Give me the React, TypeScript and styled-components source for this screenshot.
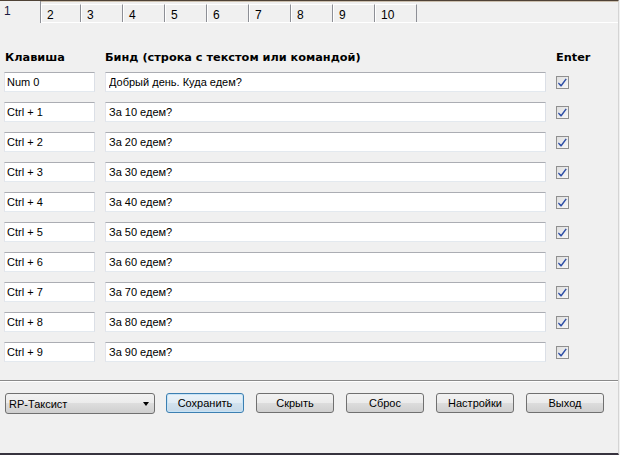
import React from "react";
import styled, { createGlobalStyle, css } from "styled-components";

const GlobalStyle = createGlobalStyle`
	html, body {
		margin: 0;
		padding: 0;
		background: #f0f0f0;
	}
	body {
		font-family: "Liberation Sans", Arial, sans-serif;
		font-size: 11px;
		color: #000;
	}
`;

const rows = [
	{ key: "Num 0", bind: "Добрый день. Куда едем?" },
	...Array.from({ length: 9 }, (_, i) => ({
		key: `Ctrl + ${i + 1}`,
		bind: `За ${(i + 1) * 10} едем?`,
	})),
];

const tabs = ["1", "2", "3", "4", "5", "6", "7", "8", "9", "10"];
const buttons = ["Сохранить", "Скрыть", "Сброс", "Настройки", "Выход"];

const tabWidth = (i: number) => (i === 0 ? 41 : i === 1 ? 40 : 42);

const App = () => {
	return (
		<>
			<GlobalStyle />
			<Window>
				<TabStrip>
					{tabs.map((t, i) => (
						<Tab key={t} $active={i === 0} $width={tabWidth(i)}>
							{t}
						</Tab>
					))}
				</TabStrip>
				<Panel>
					<Grid>
						<Heading $indent={1}>Клавиша</Heading>
						<Heading>Бинд (строка с текстом или командой)</Heading>
						<Heading>Enter</Heading>
					</Grid>
					{rows.map((r) => (
						<Row key={r.key}>
							<TextBox $pad={2} value={r.key} readOnly />
							<TextBox $pad={3} value={r.bind} readOnly />
							<CheckBox>
								<svg width="11" height="11" viewBox="0 0 11 11">
									<path
										d="M1.6 5.4 L4.1 7.4 L8.6 1.4 L9.8 2.3 L4.5 9.6 L3.6 9.6 L1 6.4 Z"
										fill="#2f4fa6"
									/>
								</svg>
							</CheckBox>
						</Row>
					))}
				</Panel>
				<Footer>
					<Combo>
						<span>RP-Таксист</span>
						<Arrow />
					</Combo>
					<Buttons>
						{buttons.map((b, i) => (
							<Button key={b} $default={i === 0}>
								{b}
							</Button>
						))}
					</Buttons>
				</Footer>
			</Window>
		</>
	);
};

const Window = styled.div`
	width: 619px;
	height: 455px;
	box-sizing: border-box;
	display: flex;
	flex-direction: column;
	border-top: 1px solid #4f4236;
	border-bottom: 2px solid #37333f;
	border-right: 1px solid #d4d4d4;
	background: #f0f0f0;
`;

const TabStrip = styled.ul`
	display: flex;
	align-items: flex-end;
	height: 21px;
	margin: 0;
	padding: 0;
	list-style: none;
	border-bottom: 1px solid #fff;
	box-shadow: inset 0 1px #cbbfae;
`;

const Tab = styled.li<{ $active: boolean; $width: number }>`
	box-sizing: border-box;
	width: ${(p) => p.$width}px;
	font-size: 12px;
	line-height: 16px;
	padding-left: 5px;
	color: #000;
	background: #f0f0f0;
	border-right: 1px solid #8d8f96;
	${(p) =>
		p.$active
			? css`
					height: 22px;
					margin-bottom: -1px;
					padding-left: 4px;
					padding-top: 2px;
					color: #1a1a40;
			  `
			: css`
					height: 18px;
					padding-top: 2px;
					border-top: 1px solid #fff;
					border-left: 1px solid #fff;
			  `}
`;

const Panel = styled.div`
	padding: 28px 0 0 4px;
`;

const Grid = styled.div`
	display: grid;
	grid-template-columns: 91px 441px 13px;
	column-gap: 10px;
	align-items: center;
`;

const Row = styled(Grid)`
	margin-top: 10px;
	height: 20px;
	&:nth-child(2) {
		margin-top: 7px;
	}
`;

const Heading = styled.div<{ $indent?: number }>`
	font-family: "DejaVu Sans", Verdana, sans-serif;
	font-weight: bold;
	font-size: 11.3px;
	line-height: 14px;
	height: 14px;
	white-space: nowrap;
	padding-left: ${(p) => p.$indent ?? 0}px;
`;

const TextBox = styled.input<{ $pad: number }>`
	box-sizing: border-box;
	width: 100%;
	height: 20px;
	margin: 0;
	padding: 0 ${(p) => p.$pad}px;
	font-family: "Liberation Sans", Arial, sans-serif;
	font-size: 11px;
	color: #000;
	background: #fff;
	border: 1px solid;
	border-color: #abadb3 #dbdfe6 #e3e9ef #e2e3ea;
	outline: none;
`;

const CheckBox = styled.span`
	box-sizing: border-box;
	width: 13px;
	height: 13px;
	display: flex;
	align-items: center;
	justify-content: center;
	border: 1px solid #8f8f8f;
	background: linear-gradient(135deg, #dedede, #f8f8f8);
	svg {
		display: block;
	}
`;

const Footer = styled.div`
	flex: 1;
	margin-top: 18px;
	border-top: 1px solid #8a8a8a;
	box-shadow: inset 0 1px #fff;
	padding: 12px 0 0 5px;
	display: flex;
	align-items: flex-start;
	gap: 11px;
`;

const controlBase = css`
	box-sizing: border-box;
	height: 20px;
	border: 1px solid #707070;
	border-radius: 3px;
	font-family: "Liberation Sans", Arial, sans-serif;
	font-size: 11px;
	color: #000;
	background: linear-gradient(#f2f2f2 0%, #ebebeb 50%, #dddddd 50%, #cfcfcf 100%);
`;

const Combo = styled.div`
	${controlBase};
	width: 150px;
	height: 21px;
	display: flex;
	align-items: center;
	justify-content: space-between;
	padding: 0 5px 0 3px;
`;

const Arrow = styled.span`
	width: 0;
	height: 0;
	border-left: 3.5px solid transparent;
	border-right: 3.5px solid transparent;
	border-top: 4px solid #000;
	margin-top: 1px;
`;

const Buttons = styled.div`
	display: flex;
	gap: 12px;
`;

const Button = styled.button<{ $default: boolean }>`
	${controlBase};
	width: 78px;
	padding: 0;
	line-height: 18px;
	text-align: center;
	${(p) =>
		p.$default &&
		css`
			border-color: #3c7fb1;
			background: linear-gradient(#eaf2f8 0%, #e0ecf5 50%, #d2e2ee 50%, #c6d9e8 100%);
			box-shadow: inset 0 0 0 1px #c7e3f6;
		`}
`;

export default App;
